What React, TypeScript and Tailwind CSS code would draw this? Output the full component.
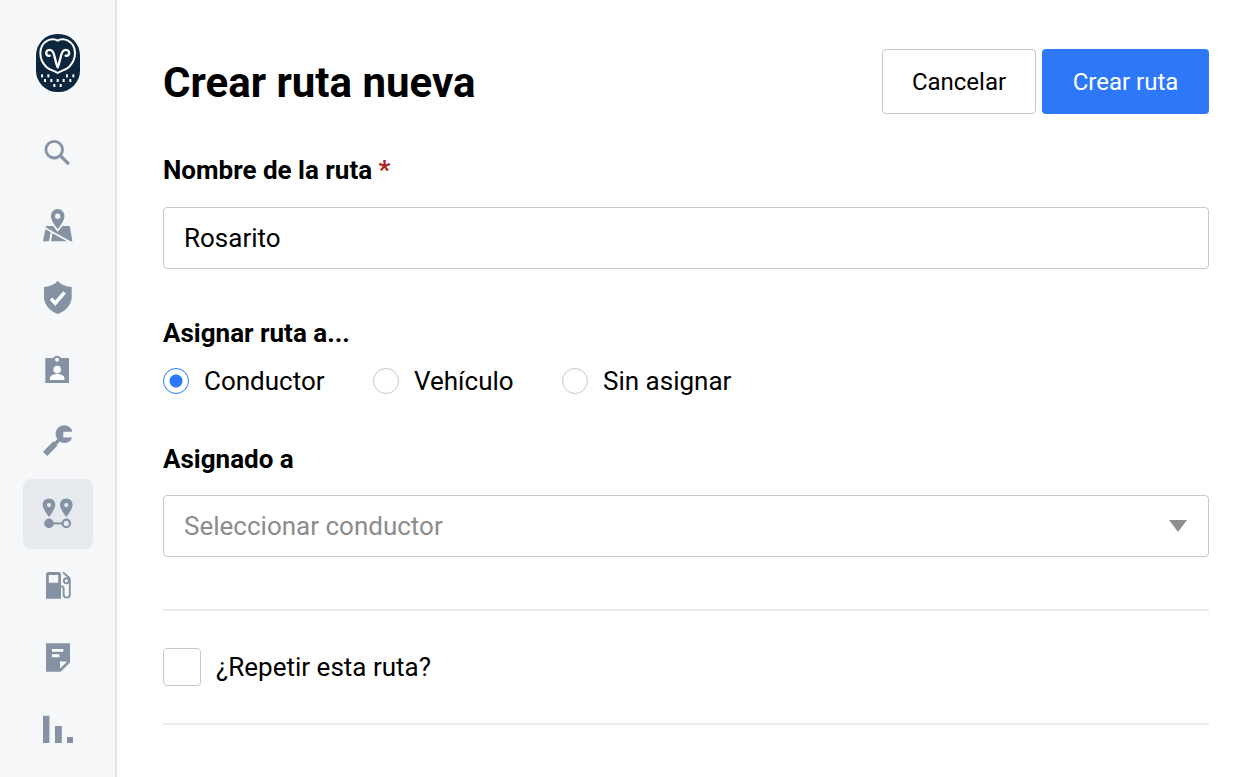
import { useState } from 'react'
import type { ReactNode } from 'react'

const Logo = () => (
  <svg viewBox="0 0 132 174" className="w-11 h-[58px]" aria-hidden="true">
    <rect width="132" height="174" rx="64" fill="#0b263d" />
    <g fill="none" stroke="#fff" strokeLinecap="round" strokeLinejoin="round">
      <path
        d="M65 20C57 14 43 15 34 20C20 28 13 41 13 57C13 74 20 88 31 99C41 108 54 110 65 117C76 110 89 108 99 99C110 88 117 74 117 57C117 41 110 28 96 20C87 15 73 14 65 20Z"
        strokeWidth="6"
      />
      <path
        d="M41 65C34 68 29 60 31 54C34 46 46 45 51 54C57 65 57 82 65 100C73 82 73 65 79 54C84 45 96 46 99 54C101 60 96 68 89 65"
        strokeWidth="7"
      />
    </g>
    <g fill="#fff">
      {[18, 37, 93, 112].map((x) => (
        <rect key={x} x={x - 3} y="121" width="6" height="9" />
      ))}
      {[27, 46, 65, 83, 103].map((x) => (
        <rect key={x} x={x - 3} y="135" width="6" height="9" />
      ))}
      {[55, 74].map((x) => (
        <rect key={x} x={x - 3} y="150" width="6" height="9" />
      ))}
    </g>
  </svg>
)

const navItems: { label: string; icon: ReactNode }[] = [
  {
    label: 'Buscar',
    icon: (
      <g fill="none" stroke="currentColor">
        <circle cx="16.2" cy="15.7" r="8.3" strokeWidth="2.8" />
        <path d="M22.3 21.6L30.8 30.1" strokeWidth="3.4" />
      </g>
    ),
  },
  {
    label: 'Mapa',
    icon: (
      <>
        <path d="M8 20H31.7L34.4 35.2H5Z" fill="currentColor" />
        <path d="M6 21.5L33 36.5M13.8 26L11.8 36" fill="none" stroke="#f6f7f9" strokeWidth="2" />
        <path
          d="M19.7 2.2C15.5 2.2 12 5.6 12 9.9C12 15.4 19.7 24.5 19.7 24.5C19.7 24.5 27.4 15.4 27.4 9.9C27.4 5.6 23.9 2.2 19.7 2.2Z"
          fill="currentColor"
          stroke="#f6f7f9"
          strokeWidth="1.8"
        />
        <circle cx="19.7" cy="10.2" r="2.6" fill="#f6f7f9" />
      </>
    ),
  },
  {
    label: 'Seguridad',
    icon: (
      <>
        <path
          d="M19.8 3C16.4 6.8 11.5 8.8 6 9V19C6 26.5 12 33.3 19.8 36C27.6 33.3 33.7 26.5 33.7 19V9C28.2 8.8 23.2 6.8 19.8 3Z"
          fill="currentColor"
        />
        <path d="M13 20.6L17.2 25.2L26.6 14.4" fill="none" stroke="#fff" strokeWidth="3.6" />
      </>
    ),
  },
  {
    label: 'Conductores',
    icon: (
      <>
        <path d="M7.3 8H15.2A4.3 4.3 0 0 1 22.8 8H31V33H7.3Z" fill="currentColor" />
        <circle cx="19" cy="9.8" r="2" fill="#fff" />
        <circle cx="19.2" cy="19.6" r="3.8" fill="#fff" />
        <path d="M12 30V28C12 25.4 16.5 24 19.2 24C21.9 24 26.4 25.4 26.4 28V30Z" fill="#fff" />
      </>
    ),
  },
  {
    label: 'Mantenimiento',
    icon: (
      <path
        d="M34.4 9.8H25.3V15.4H34.4A8.6 8.6 0 0 1 21.8 19.6L18.6 22.9L19.3 23.7L9.2 34L5 29.8L15.2 19.4L16.2 20.2L19.5 17.1A8.5 8.5 0 1 1 34.4 9.8Z"
        fill="currentColor"
      />
    ),
  },
  {
    label: 'Rutas',
    icon: (
      <>
        {[11, 28.3].map((x) => (
          <g key={x} transform={`translate(${x} 0)`}>
            <path
              fillRule="evenodd"
              d="M0 4.4C-3.6 4.4 -6.3 7.2 -6.3 10.7C-6.3 15.2 0 23 0 23C0 23 6.3 15.2 6.3 10.7C6.3 7.2 3.6 4.4 0 4.4ZM0 9A2.1 2.1 0 1 1 0 13.2A2.1 2.1 0 1 1 0 9Z"
              fill="currentColor"
            />
          </g>
        ))}
        <circle cx="11" cy="29.4" r="4.8" fill="currentColor" />
        <path d="M11 29.4H24.5" stroke="currentColor" strokeWidth="2" />
        <circle cx="28.3" cy="29.4" r="3.7" fill="none" stroke="currentColor" strokeWidth="2.2" />
      </>
    ),
  },
  {
    label: 'Combustible',
    icon: (
      <>
        <path
          fillRule="evenodd"
          d="M8 8.5A2.5 2.5 0 0 1 10.5 6H20.5A2.5 2.5 0 0 1 23 8.5V32.8H8ZM10.8 9V16.8H20.2V9Z"
          fill="currentColor"
        />
        <g fill="none" stroke="currentColor" strokeWidth="1.9">
          <path d="M23 20.4H24.2Q25.6 20.4 25.6 22V28.5A3.1 3.1 0 0 0 31.8 28.5V14Q31.8 12.4 30.6 11.2L25 6.4" />
          <circle cx="28.4" cy="14.8" r="2.5" />
        </g>
      </>
    ),
  },
  {
    label: 'Documentos',
    icon: (
      <>
        <path d="M8 5.3H32V24.4L22.7 33.7H8Z" fill="currentColor" />
        <path d="M14 11H25.3V13.8H14ZM14 16.3H21.4V19.3H14ZM22 23.4H29.2L22 30.6Z" fill="#fff" />
      </>
    ),
  },
  {
    label: 'Informes',
    icon: <path d="M5 5.7H11.4V33H5ZM17 16H23.8V33H17ZM29 27H35V33H29Z" fill="currentColor" />,
  },
]

const assignOptions = [
  { value: 'conductor', label: 'Conductor' },
  { value: 'vehiculo', label: 'Vehículo' },
  { value: 'ninguno', label: 'Sin asignar' },
]

const Sidebar = () => (
  <aside className="shrink-0 w-[117px] flex flex-col items-center pt-[34px] bg-[#f6f7f9] border-r-2 border-[#e5e6ea]">
    <a href="#inicio" aria-label="Inicio">
      <Logo />
    </a>
    <nav className="mt-[27px] flex flex-col gap-0.5">
      {navItems.map(({ label, icon }) => (
        <a
          key={label}
          href="#"
          aria-label={label}
          className={
            label === 'Rutas'
              ? 'size-[70px] flex items-center justify-center rounded-lg text-[#8492a3] bg-[#e6e9ee]'
              : 'size-[70px] flex items-center justify-center rounded-lg text-[#8492a3]'
          }
        >
          <svg viewBox="0 0 40 40" className="size-10" aria-hidden="true">
            {icon}
          </svg>
        </a>
      ))}
    </nav>
  </aside>
)

const App: React.FC = () => {
  const [name, setName] = useState('Rosarito')
  const [assignTo, setAssignTo] = useState('conductor')
  const [repeat, setRepeat] = useState(false)

  return (
    <div className="h-screen overflow-hidden flex bg-white text-black font-['Roboto',sans-serif] text-[26px] leading-8">
      <Sidebar />

      <main className="flex-1 min-w-0 px-[46px] pt-[49px]">
        <form onSubmit={(e) => e.preventDefault()}>
          <header className="flex items-center justify-between">
            <h1 className="text-[42px] leading-[52px] pt-0.5 font-bold">Crear ruta nueva</h1>
            <div className="flex gap-1.5 text-2xl">
              <button type="button" className="w-[154px] h-[65px] rounded border border-[#c8c8c8]">
                Cancelar
              </button>
              <button type="submit" className="w-[167px] h-[65px] rounded bg-[#2c78f8] text-white">
                Crear ruta
              </button>
            </div>
          </header>

          <label htmlFor="nombre" className="block mt-10 font-bold">
            Nombre de la ruta <span className="text-[#b02222]">*</span>
          </label>
          <input
            id="nombre"
            type="text"
            value={name}
            onChange={(e) => setName(e.target.value)}
            className="block w-full h-[62px] mt-[21px] px-5 rounded border border-[#c8c8c8] outline-none"
          />

          <fieldset className="mt-12">
            <legend className="font-bold">Asignar ruta a...</legend>
            <div className="mt-4 grid grid-cols-[210px_189px_auto]">
              {assignOptions.map((option) => (
                <label key={option.value} className="flex items-center gap-[15px]">
                  <input
                    type="radio"
                    name="asignar"
                    value={option.value}
                    checked={assignTo === option.value}
                    onChange={() => setAssignTo(option.value)}
                    className="appearance-none size-[26px] rounded-full border border-[#c8c8c8] checked:border-[#2c78f8] checked:bg-[radial-gradient(circle,#2c78f8_6px,white_7px)]"
                  />
                  {option.label}
                </label>
              ))}
            </div>
          </fieldset>

          <label htmlFor="asignado" className="block mt-[46px] font-bold">
            Asignado a
          </label>
          <div className="relative mt-5">
            <select
              id="asignado"
              defaultValue=""
              className="appearance-none block w-full h-[62px] px-5 rounded border border-[#c8c8c8] bg-white text-[#8c8c8c] outline-none"
            >
              <option value="">Seleccionar conductor</option>
            </select>
            <svg
              viewBox="0 0 18 12"
              className="absolute right-[22px] top-[25px] w-[18px] h-3 pointer-events-none"
              aria-hidden="true"
            >
              <path d="M0 0H18L9 12Z" fill="#8f8f8f" />
            </svg>
          </div>

          <div className="mt-[52px] py-[37px] border-y-2 border-[#ebebeb]">
            <label className="flex items-center gap-[15px]">
              <input
                type="checkbox"
                checked={repeat}
                onChange={(e) => setRepeat(e.target.checked)}
                className="appearance-none size-[38px] rounded border border-[#c8c8c8] checked:bg-[#2c78f8]"
              />
              ¿Repetir esta ruta?
            </label>
          </div>
        </form>
      </main>
    </div>
  )
}

export default App
